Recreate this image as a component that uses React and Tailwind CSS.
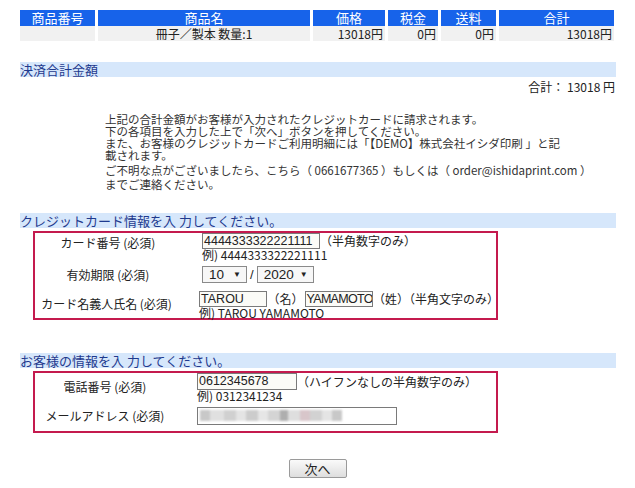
import React from 'react'

const headCell = 'h-[16px] bg-[#1763ea] text-white text-[13px] leading-[16px] text-center'
const rowCell = 'h-[15px] bg-[#f1f1f1] text-[12px] leading-[15px] text-[#222]'
const bar = 'h-[15px] bg-[#d6e7fb] text-[#1f3a8e] text-[13px] leading-[15px] whitespace-nowrap'
const inputBox = "border border-[#7a7a7a] bg-[#fbfbf7] font-['Liberation_Sans',sans-serif] text-[12.5px] text-[#222] px-[1px] overflow-hidden whitespace-nowrap"

const Select = ({ value, width }) => (
  <div className={`${width} h-[17px] border border-[#8a8a8a] bg-[#f7f7f7] flex items-center justify-between pl-[6px] pr-[5px] font-['Liberation_Sans',sans-serif] text-[13.5px] leading-[15px] text-[#222]`}>
    <span>{value}</span>
    <span className="text-[8px] leading-[8px]">▼</span>
  </div>
)

const Blur = () => {
  const blocks = [
    ['w-[10px]', 'bg-[#c8c8c8]'], ['w-[14px]', 'bg-[#e0e0e0]'], ['w-[12px]', 'bg-[#d0d0d0]'],
    ['w-[10px]', 'bg-[#e4e4e4]'], ['w-[12px]', 'bg-[#cccccc]'], ['w-[10px]', 'bg-[#e6e6e6]'],
    ['w-[12px]', 'bg-[#d4d4d4]'], ['w-[8px]', 'bg-[#aeaeae]'], ['w-[12px]', 'bg-[#dedede]'],
    ['w-[10px]', 'bg-[#d8c6ca]'], ['w-[12px]', 'bg-[#d2d2d2]'], ['w-[10px]', 'bg-[#e4e4e4]'],
    ['w-[10px]', 'bg-[#c8c8c8]'],
  ]
  return (
    <div className="flex h-[11px] mt-[2px] ml-[2px] blur-[1px]">
      {blocks.map(([w, c], i) => (
        <div key={i} className={`${w} h-full ${c}`} />
      ))}
    </div>
  )
}

const App = () => {
  return (
    <div className="w-[635px] h-[488px] bg-white font-['Noto_Sans_CJK_JP',sans-serif] text-[12px] text-[#222]">
      <div className="pl-[20px] pr-[19px] pt-[10px]">
        {/* order table */}
        <div className="grid grid-cols-[75px_212px_72px_50px_55px_115px] gap-x-[3px]">
          <div className={headCell}>商品番号</div>
          <div className={headCell}>商品名</div>
          <div className={headCell}>価格</div>
          <div className={headCell}>税金</div>
          <div className={headCell}>送料</div>
          <div className={headCell}>合計</div>
          <div className={rowCell}></div>
          <div className={`${rowCell} text-center`}>冊子／製本 数量:1</div>
          <div className={`${rowCell} text-right pr-[2px]`}>13018円</div>
          <div className={`${rowCell} text-right pr-[2px]`}>0円</div>
          <div className={`${rowCell} text-right pr-[2px]`}>0円</div>
          <div className={`${rowCell} text-right pr-[2px]`}>13018円</div>
        </div>

        <div className={`${bar} mt-[21px]`}>決済合計金額</div>
        <div className="mt-[3px] h-[14px] leading-[14px] text-right pr-[1px]">合計： 13018 円</div>

        <div className="mt-[19px] pl-[85px] text-[11.5px] text-[#333] whitespace-nowrap">
          <div className="leading-[12px]">上記の合計金額がお客様が入力されたクレジットカードに請求されます。</div>
          <div className="leading-[12px]">下の各項目を入力した上で「次へ」ボタンを押してください。</div>
          <div className="leading-[12px]">また、お客様のクレジットカードご利用明細には「【DEMO】株式会社イシダ印刷 」と記</div>
          <div className="leading-[12px]">載されます。</div>
          <div className="leading-[12px] mt-[3px]">ご不明な点がございましたら、こちら（ 0661677365 ）もしくは（ order@ishidaprint.com ）</div>
          <div className="leading-[12px] mt-[2px]">までご連絡ください。</div>
        </div>

        {/* credit card */}
        <div className={`${bar} mt-[23px]`}>クレジットカード情報を入 力してください。</div>
        <div className="mt-[3px] ml-[13px] w-[465px] h-[89px] border-2 border-[#c41a4e]">
          <div className="flex">
            <div className="w-[146px] text-center pt-[2px] leading-[16px]">カード番号 (必須)</div>
            <div className="ml-[21px]">
              <div className="flex items-center">
                <div className={`${inputBox} w-[118px] h-[16px] leading-[14px]`}>4444333322221111</div>
                <span className="leading-[16px]">（半角数字のみ）</span>
              </div>
              <div className="h-[12px] leading-[12px] text-[12px]">例) 4444333322221111</div>
            </div>
          </div>
          <div className="flex mt-[4px] items-center">
            <div className="w-[146px] text-center leading-[17px]">有効期限 (必須)</div>
            <div className="ml-[21px] flex items-center">
              <Select value="10" width="w-[45px]" />
              <span className="mx-[3px] font-['Liberation_Sans',sans-serif] text-[13px]">/</span>
              <Select value="2020" width="w-[57px]" />
            </div>
          </div>
          <div className="flex mt-[6px]">
            <div className="w-[146px] text-center pt-[5px] leading-[16px]">カード名義人氏名 (必須)</div>
            <div className="ml-[21px]">
              <div className="flex items-center">
                <div className={`${inputBox} w-[69px] h-[16px] leading-[14px]`}>TAROU</div>
                <span className="leading-[16px] mx-[1px]">（名）</span>
                <div className={`${inputBox} w-[70px] h-[16px] leading-[14px] text-[11px] tracking-[-0.7px]`}>YAMAMOTO</div>
                <span className="leading-[16px]">（姓）（半角文字のみ）</span>
              </div>
              <div className="h-[12px] leading-[12px] text-[12px]">例) TAROU YAMAMOTO</div>
            </div>
          </div>
        </div>

        {/* customer */}
        <div className={`${bar} mt-[33px]`}>お客様の情報を入 力してください。</div>
        <div className="mt-[3px] ml-[13px] w-[465px] h-[62px] border-2 border-[#c41a4e]">
          <div className="flex">
            <div className="w-[140px] text-center pt-[7px] leading-[14px]">電話番号 (必須)</div>
            <div className="ml-[22px]">
              <div className="flex items-center">
                <div className={`${inputBox} w-[100px] h-[17px] leading-[15px]`}>0612345678</div>
                <span className="leading-[17px]">（ハイフンなしの半角数字のみ）</span>
              </div>
              <div className="h-[12px] leading-[12px] text-[12px]">例) 0312341234</div>
            </div>
          </div>
          <div className="flex mt-[5px] items-center">
            <div className="w-[140px] text-center leading-[18px]">メールアドレス (必須)</div>
            <div className="ml-[22px]">
              <div className="w-[200px] h-[18px] border border-[#7a7a7a] bg-white overflow-hidden">
                <Blur />
              </div>
            </div>
          </div>
        </div>
      </div>

      <div className="flex justify-center mt-[26px]">
        <button className="w-[58px] h-[19px] border border-[#9a9a9a] rounded-[2px] bg-gradient-to-b from-[#fafafa] to-[#dedede] text-[13px] leading-[17px] text-[#222]">
          次へ
        </button>
      </div>
    </div>
  )
}

export default App
